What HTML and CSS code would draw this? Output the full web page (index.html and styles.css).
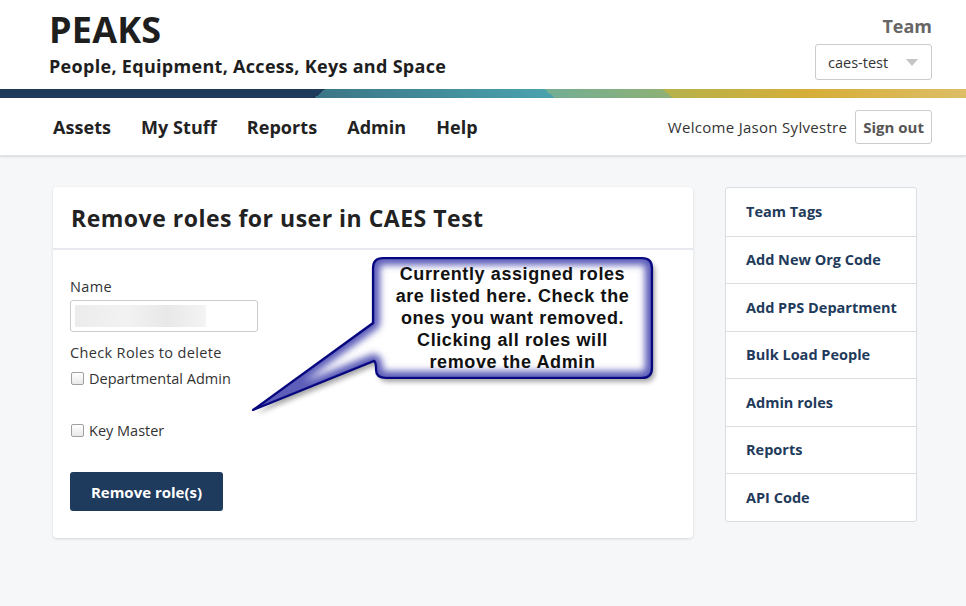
FILE: index.html
```html
<!DOCTYPE html>
<html>
<head>
<meta charset="utf-8">
<title>PEAKS</title>
<link rel="stylesheet" href="styles.css">
</head>
<body>
<header class="top">
  <div class="wrap top-inner">
    <div class="brand">
      <div class="brand-title">PEAKS</div>
      <div class="brand-sub">People, Equipment, Access, Keys and Space</div>
    </div>
    <div class="team">
      <div class="team-label">Team</div>
      <div class="team-select"><span>caes-test</span><span class="caret"></span></div>
    </div>
  </div>
</header>
<div class="stripe"></div>
<nav class="navbar">
  <div class="wrap nav-inner">
    <ul class="nav-links">
      <li>Assets</li>
      <li>My Stuff</li>
      <li>Reports</li>
      <li>Admin</li>
      <li>Help</li>
    </ul>
    <div class="nav-user">
      <span class="welcome">Welcome Jason Sylvestre</span>
      <span class="signout">Sign out</span>
    </div>
  </div>
</nav>
<main class="content">
  <section class="card">
    <div class="card-head"><h1>Remove roles for user in CAES Test</h1></div>
    <div class="card-body">
      <div class="label">Name</div>
      <div class="input"><span class="blur"></span></div>
      <div class="label roles-label">Check Roles to delete</div>
      <label class="check first"><input type="checkbox"><span>Departmental Admin</span></label>
      <label class="check second"><input type="checkbox"><span>Key Master</span></label>
      <button class="btn">Remove role(s)</button>
    </div>
    <div class="callout">
      <svg class="callout-svg" width="430" height="180" viewBox="0 0 430 180">
        <defs>
          <clipPath id="bubbleClip">
            <path id="bubblePath" d="M143 8 H402 Q412 8 412 18 V118 Q412 128 402 128 H146 Q136 128 136 120 Q136 112 134 111 L13 160 L133 73 V18 Q133 8 143 8 Z"/>
          </clipPath>
          <filter id="shadow" x="-10%" y="-10%" width="130%" height="130%">
            <feDropShadow dx="3" dy="4" stdDeviation="2.5" flood-color="#000" flood-opacity="0.35"/>
          </filter>
          <filter id="glow" x="-10%" y="-10%" width="120%" height="120%">
            <feGaussianBlur stdDeviation="3.5"/>
          </filter>
        </defs>
        <g filter="url(#shadow)">
          <use href="#bubblePath" fill="#ffffff"/>
        </g>
        <g clip-path="url(#bubbleClip)">
          <use href="#bubblePath" fill="none" stroke="#5d5dba" stroke-width="14" stroke-linejoin="round" filter="url(#glow)"/>
          <use href="#bubblePath" fill="none" stroke="#4a4aae" stroke-width="3" stroke-linejoin="round"/>
        </g>
        <use href="#bubblePath" fill="none" stroke="#06067f" stroke-width="2.2" stroke-linejoin="round"/>
      </svg>
      <div class="callout-text">Currently assigned roles are listed here. Check the ones you want removed. Clicking all roles will remove the Admin</div>
    </div>
  </section>
  <aside class="side">
    <div class="side-item">Team Tags</div>
    <div class="side-item">Add New Org Code</div>
    <div class="side-item">Add PPS Department</div>
    <div class="side-item">Bulk Load People</div>
    <div class="side-item">Admin roles</div>
    <div class="side-item">Reports</div>
    <div class="side-item">API Code</div>
  </aside>
</main>
</body>
</html>
```

FILE: styles.css
```css
* { box-sizing: border-box; }
html, body { margin: 0; padding: 0; }
body {
  background: #f6f7f9;
  font-family: "Open Sans", "Lato", sans-serif;
  color: #222;
  width: 966px;
  height: 606px;
  overflow: hidden;
}
.wrap { margin-left: 49px; margin-right: 34px; }

.top { background: #fff; height: 89px; }
.top-inner { display: flex; justify-content: space-between; height: 89px; }
.brand { padding-top: 9px; }
.brand-title { font-size: 36px; font-weight: 700; line-height: 42px; color: #1e1e1e; letter-spacing: 0.2px; }
.brand-sub { font-size: 18px; font-weight: 700; line-height: 22px; margin-top: 4px; color: #1e1e1e; letter-spacing: 0.3px; }
.team { display: flex; flex-direction: column; align-items: flex-end; padding-top: 14px; }
.team-label { font-size: 18px; font-weight: 700; color: #666; line-height: 24px; }
.team-select {
  margin-top: 6px;
  width: 117px; height: 36px;
  border: 1px solid #ccc; border-radius: 3px;
  display: flex; align-items: center; justify-content: space-between;
  padding: 0 13px 0 12px;
  font-size: 14.5px; color: #333; background: #fff;
}
.caret { width: 0; height: 0; border-left: 6px solid transparent; border-right: 6px solid transparent; border-top: 7px solid #c4c4c4; }

.stripe {
  height: 9px;
  background:
    linear-gradient(140deg, #1f3b5b 33.3%, transparent 33.3%),
    linear-gradient(40deg, #3b7686 33%, #4aa2ae 56.8%, transparent 56.8%),
    linear-gradient(40deg, #72ad95 56%, #8eb176 68.9%, transparent 68.9%),
    linear-gradient(90deg, #b4b24c 68%, #d6ae38 84%, #ddbe66 100%);
}

.navbar { background: #fff; height: 58px; box-shadow: 0 1px 2px rgba(0,0,0,0.12); border-bottom: 1px solid #e2e3e8; }
.nav-inner { display: flex; justify-content: space-between; align-items: center; height: 57px; }
.nav-links { list-style: none; margin: 0; padding: 0 0 0 4px; display: flex; gap: 30px; }
.nav-links li { font-size: 18px; font-weight: 700; color: #222; letter-spacing: 0.05px; }
.nav-user { display: flex; align-items: center; gap: 8px; }
.welcome { font-size: 15px; color: #333; letter-spacing: 0.3px; }
.signout {
  height: 34px; padding: 0 7px; display: flex; align-items: center;
  border: 1px solid #ccc; border-radius: 3px;
  font-size: 15px; font-weight: 700; color: #555;
}

.content { display: flex; gap: 32px; padding: 31px 0 0 53px; align-items: flex-start; }
.card {
  position: relative;
  width: 640px; height: 351px;
  background: #fff; border-radius: 4px;
  box-shadow: 0 1px 3px rgba(0,0,0,0.13);
}
.card-head { height: 63px; display: flex; align-items: center; padding: 0 18px; border-bottom: 2px solid #e8e9ee; }
.card-head h1 { margin: 0; font-size: 23px; font-weight: 700; color: #222; letter-spacing: 0.5px; }
.card-body { padding: 27px 17px 0 17px; }
.label { font-size: 14.5px; line-height: 20px; color: #333; letter-spacing: 0.35px; }
.input { margin-top: 3px; width: 188px; height: 32px; border: 1px solid #ccc; border-radius: 3px; padding: 4px; }
.blur { display: block; width: 131px; height: 22px; background: linear-gradient(90deg, #ececec, #f2f2f2 40%, #e8e8e8 70%, #f4f4f4); }
.roles-label { margin-top: 11px; }
.check { display: flex; align-items: center; height: 20px; font-size: 14.5px; color: #333; }
.check.first { margin-top: 5px; }
.check.second { margin-top: 32px; }
.check input {
  appearance: none; -webkit-appearance: none;
  margin: 0 5px 0 1px; width: 13px; height: 13px;
  border: 1px solid #a0a0a0; border-radius: 2px;
  background: linear-gradient(#fff, #e9e9e9);
}
.btn {
  margin-top: 32px;
  width: 153px; height: 39px;
  background: #1e3a5c; color: #fff; border: none; border-radius: 3px;
  font-family: "Open Sans", sans-serif; font-size: 15px; font-weight: 700;
}

.callout { position: absolute; left: 187px; top: 63px; width: 430px; height: 180px; }
.callout-svg { position: absolute; left: 0; top: 0; }
.callout-text {
  position: absolute; left: 133px; top: 8px; width: 279px; height: 120px;
  display: flex; align-items: center; justify-content: center; text-align: center;
  font-family: "Liberation Sans", Arial, sans-serif; font-weight: 700;
  font-size: 18px; letter-spacing: 0.6px; line-height: 22px; color: #111;
  padding: 0 14px;
}

.side { width: 192px; background: #fff; border: 1px solid #dcdde2; border-radius: 3px; }
.side-item {
  height: 47.5px; display: flex; align-items: center; padding-left: 20px;
  font-size: 14.5px; font-weight: 700; color: #1f3b5b;
  border-top: 1px solid #dcdde2;
}
.side-item:first-child { border-top: none; }
```
